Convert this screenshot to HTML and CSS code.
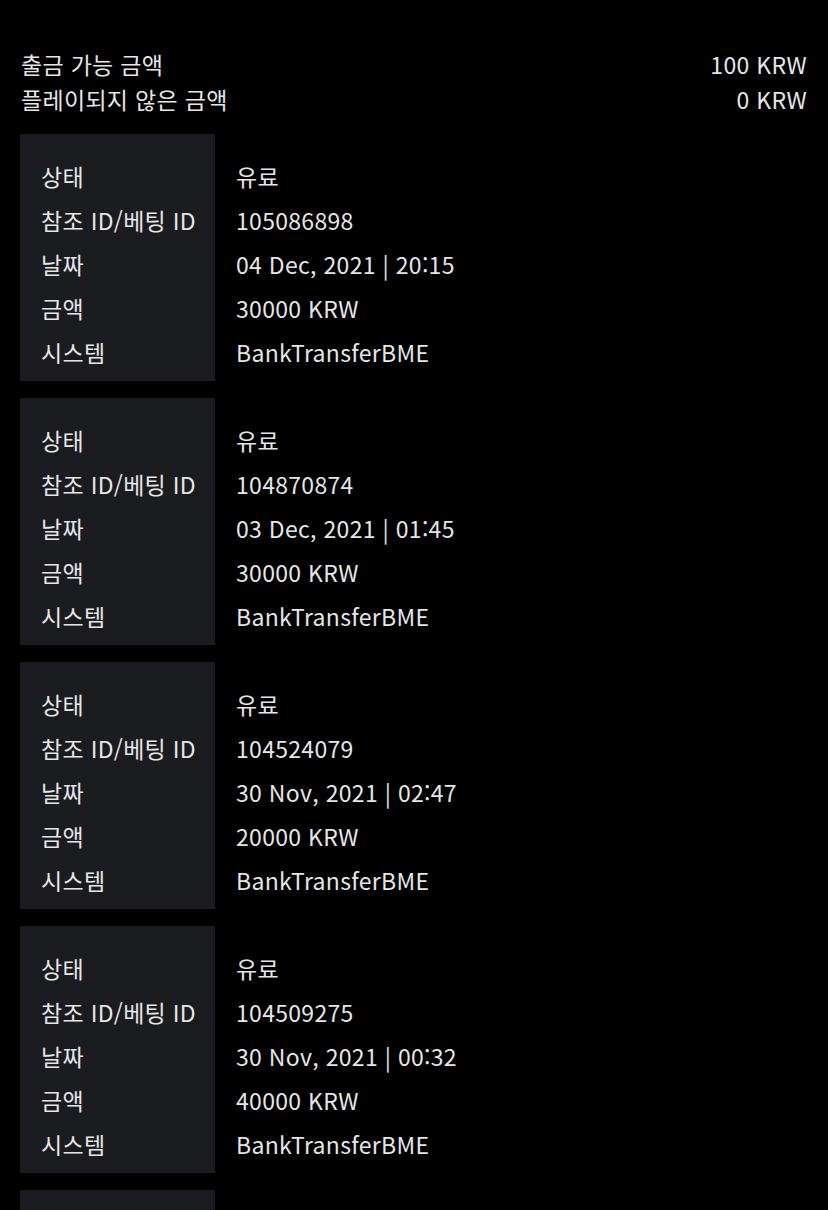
FILE: index.html
```html
<!DOCTYPE html>
<html lang="ko">
  <head>
    <meta charset="UTF-8" />
    <meta name="viewport" content="width=device-width, initial-scale=1.0" />
    <title>거래 내역</title>
    <link rel="stylesheet" href="styles.css">
  </head>
  <body>
    <div class="container">
      <div class="summary">
        <div class="summary-row">
          <span>출금 가능 금액</span>
          <span>100 KRW</span>
        </div>
        <div class="summary-row">
          <span>플레이되지 않은 금액</span>
          <span>0 KRW</span>
        </div>
      </div>

      <div class="card">
        <div class="labels">
          <div class="cell">상태</div>
          <div class="cell">참조 ID/베팅 ID</div>
          <div class="cell">날짜</div>
          <div class="cell">금액</div>
          <div class="cell">시스템</div>
        </div>
        <div class="values">
          <div class="cell">유료</div>
          <div class="cell">105086898</div>
          <div class="cell">04 Dec, 2021 | 20:15</div>
          <div class="cell">30000 KRW</div>
          <div class="cell">BankTransferBME</div>
        </div>
      </div>

      <div class="card">
        <div class="labels">
          <div class="cell">상태</div>
          <div class="cell">참조 ID/베팅 ID</div>
          <div class="cell">날짜</div>
          <div class="cell">금액</div>
          <div class="cell">시스템</div>
        </div>
        <div class="values">
          <div class="cell">유료</div>
          <div class="cell">104870874</div>
          <div class="cell">03 Dec, 2021 | 01:45</div>
          <div class="cell">30000 KRW</div>
          <div class="cell">BankTransferBME</div>
        </div>
      </div>

      <div class="card">
        <div class="labels">
          <div class="cell">상태</div>
          <div class="cell">참조 ID/베팅 ID</div>
          <div class="cell">날짜</div>
          <div class="cell">금액</div>
          <div class="cell">시스템</div>
        </div>
        <div class="values">
          <div class="cell">유료</div>
          <div class="cell">104524079</div>
          <div class="cell">30 Nov, 2021 | 02:47</div>
          <div class="cell">20000 KRW</div>
          <div class="cell">BankTransferBME</div>
        </div>
      </div>

      <div class="card">
        <div class="labels">
          <div class="cell">상태</div>
          <div class="cell">참조 ID/베팅 ID</div>
          <div class="cell">날짜</div>
          <div class="cell">금액</div>
          <div class="cell">시스템</div>
        </div>
        <div class="values">
          <div class="cell">유료</div>
          <div class="cell">104509275</div>
          <div class="cell">30 Nov, 2021 | 00:32</div>
          <div class="cell">40000 KRW</div>
          <div class="cell">BankTransferBME</div>
        </div>
      </div>

      <!-- next record starts below the fold -->
      <div class="card card-peek">
        <div class="labels"></div>
        <div class="values"></div>
      </div>
    </div>
  </body>
</html>
```

FILE: styles.css
```css
html,
body {
  margin: 0;
  padding: 0;
  background-color: #000;
}
body {
  font-family: "Noto Sans CJK KR", "Noto Sans", sans-serif;
  font-size: 23px;
  letter-spacing: 0.3px;
  color: #e6e6e6;
}
.container {
  padding: 47px 21px 0 20px;
}
.summary {
  margin-bottom: 17px;
}
.summary-row {
  display: flex;
  justify-content: space-between;
  line-height: 35px;
  padding-left: 1px;
}
.card {
  display: flex;
  margin-bottom: 17px;
}
.labels {
  width: 195px;
  flex-shrink: 0;
  background-color: #1b1c20;
  padding: 20px 0 7px 21px;
  box-sizing: border-box;
}
.values {
  flex: 1;
  padding: 20px 0 7px 21px;
}
.cell {
  height: 44px;
  line-height: 44px;
  white-space: nowrap;
}
.card-peek .labels,
.card-peek .values {
  height: 247px;
}
```
